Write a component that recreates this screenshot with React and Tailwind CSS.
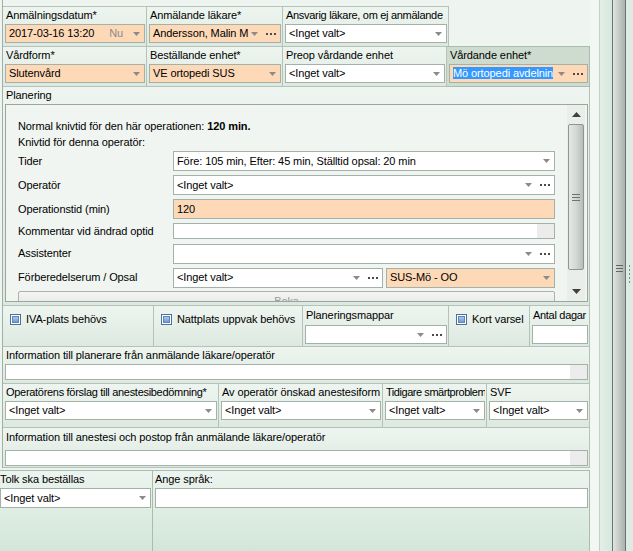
import React from 'react';

const cellBg = 'bg-linear-to-b from-[#eef5f0] to-[#dde9e0]';
const cellLine = 'border-r border-b border-[#b3c4b7]';

function Arrow() {
  return (
    <svg width="7" height="4" viewBox="0 0 7 4" className="shrink-0">
      <path d="M0 0H7L3.5 4Z" fill="#8b8b8b" />
    </svg>
  );
}

function Dots() {
  return (
    <svg width="10" height="2" viewBox="0 0 10 2" className="shrink-0">
      <rect x="0" y="0" width="2" height="2" fill="#4a4a4a" />
      <rect x="4" y="0" width="2" height="2" fill="#4a4a4a" />
      <rect x="8" y="0" width="2" height="2" fill="#4a4a4a" />
    </svg>
  );
}

function Field({ value, orange, arrow, dots, nu, textarea, selected, h = 'h-[19px]', className = '' }) {
  return (
    <div
      className={`flex items-center ${h} border border-[#a4b1a8] ${orange ? 'bg-[#fdd9b7]' : 'bg-white'} ${className}`}
    >
      <div className="flex-1 min-w-0 pl-[3px] whitespace-nowrap overflow-hidden">
        {selected ? <span className="bg-[#3399ff] text-white">{value}</span> : value}
      </div>
      {nu && <span className="text-[#8a8a8a] mr-[10px]">Nu</span>}
      {arrow && (
        <div className={dots ? 'mr-[8px]' : 'mr-[4px]'}>
          <Arrow />
        </div>
      )}
      {dots && (
        <div className="mr-[4px]">
          <Dots />
        </div>
      )}
      {textarea && <div className="w-[17px] self-stretch bg-[#ececec]" />}
    </div>
  );
}

function Check({ label }) {
  return (
    <div className="flex items-center gap-[5px] pt-[7px] pl-[5px]">
      <div className="w-[11px] h-[11px] border border-[#4f6f96] bg-white p-px">
        <div className="w-full h-full border border-[#5d86bb] bg-linear-to-b from-[#a9c7ec] to-[#6f9bd3]" />
      </div>
      <span className="leading-[12px] whitespace-nowrap">{label}</span>
    </div>
  );
}

function Cell({ w, label, children, className = '', labelClass = 'h-[17px] leading-[17px]', pb = 'pb-[3px]' }) {
  return (
    <div className={`${w} ${cellLine} ${cellBg} pl-[2px] pr-px ${pb} flex flex-col ${className}`}>
      {label && <div className={`${labelClass} pl-px whitespace-nowrap overflow-hidden`}>{label}</div>}
      {children}
    </div>
  );
}

function PlanRow({ label, children }) {
  return (
    <div className="flex items-center">
      <div className="w-[155px] shrink-0">{label}</div>
      <div className="w-[382px]">{children}</div>
    </div>
  );
}

function Planering() {
  return (
    <div className="h-[198px] border border-[#9aa69e] bg-[#f0f5f1] flex overflow-hidden">
      <div className="w-[561px] pl-[12px] pr-[12px] pt-[13px] flex flex-col">
        <div className="h-[16px] leading-[16px]">
          Normal knivtid för den här operationen: <b>120 min.</b>
        </div>
        <div className="h-[16px] leading-[16px]">Knivtid för denna operatör:</div>
        <div className="flex flex-col gap-[4px] mt-px">
          <PlanRow label="Tider">
            <Field h="h-[20px]" value="Före: 105 min, Efter: 45 min, Ställtid opsal: 20 min" arrow />
          </PlanRow>
          <PlanRow label="Operatör">
            <Field h="h-[20px]" value="<Inget valt>" arrow dots />
          </PlanRow>
          <PlanRow label="Operationstid (min)">
            <Field h="h-[20px]" value="120" orange />
          </PlanRow>
          <PlanRow label="Kommentar vid ändrad optid">
            <Field h="h-[16px]" value="" textarea />
          </PlanRow>
          <PlanRow label="Assistenter">
            <Field h="h-[20px]" value="" arrow dots />
          </PlanRow>
          <PlanRow label="Förberedelserum / Opsal">
            <div className="flex gap-[3px]">
              <Field h="h-[20px]" className="w-[210px]" value="<Inget valt>" arrow dots />
              <Field h="h-[20px]" className="w-[169px]" value="SUS-Mö - OO" arrow orange />
            </div>
          </PlanRow>
        </div>
        <div className="mt-[3px] h-[22px] shrink-0 border border-[#a9b2ac] rounded-[2px] bg-linear-to-b from-[#f4f5f4] to-[#dde2de] flex items-center justify-center text-[#9a9a9a]">
          Boka
        </div>
      </div>
      <div className="w-[18px] flex flex-col items-center bg-[#eaeeeb] py-px">
        <div className="h-[17px] flex items-center justify-center">
          <svg width="9" height="5" viewBox="0 0 9 5">
            <path d="M0 5L4.5 0L9 5Z" fill="#404040" />
          </svg>
        </div>
        <div className="mt-[1px] h-[146px] w-[16px] rounded-[2px] border border-[#8c9692] bg-linear-to-r from-[#e4e7e5] via-[#d3d8d5] to-[#b7beba] flex items-center justify-center">
          <svg width="8" height="7" viewBox="0 0 8 7">
            <rect x="0" y="0" width="8" height="1" fill="#6c7470" />
            <rect x="0" y="3" width="8" height="1" fill="#6c7470" />
            <rect x="0" y="6" width="8" height="1" fill="#6c7470" />
          </svg>
        </div>
        <div className="flex-1" />
        <div className="h-[17px] flex items-center justify-center">
          <svg width="9" height="5" viewBox="0 0 9 5">
            <path d="M0 0L4.5 5L9 0Z" fill="#404040" />
          </svg>
        </div>
      </div>
    </div>
  );
}

export default function App() {
  return (
    <div className="w-[633px] h-[551px] overflow-hidden flex bg-[#eef5f0] text-[11px] text-black font-['Liberation_Sans',Arial,sans-serif] tracking-[-0.1px]">
      <div className="w-[590px] shrink-0 flex flex-col">
        <div className="ml-[2px] border-l border-[#9fb1a4] flex flex-col">
          <div className="h-[6px]" />
          {/* row 1 */}
          <div className="flex">
            <div className="flex border-t border-[#b3c4b7]">
              <Cell w="w-[144px]" label="Anmälningsdatum*">
                <Field value="2017-03-16 13:20" orange nu arrow />
              </Cell>
              <Cell w="w-[136px]" label="Anmälande läkare*">
                <Field value="Andersson, Malin M" orange arrow dots />
              </Cell>
              <Cell
                w="w-[166px]"
                label="Ansvarig läkare, om ej anmälande"
                labelClass="h-[17px] leading-[17px] tracking-[-0.3px]"
              >
                <Field value="<Inget valt>" arrow />
              </Cell>
            </div>
          </div>
          {/* row 2 */}
          <div className="flex">
            <Cell w="w-[144px]" label="Vårdform*">
              <Field value="Slutenvård" orange arrow />
            </Cell>
            <Cell w="w-[136px]" label="Beställande enhet*">
              <Field value="VE ortopedi SUS" orange arrow />
            </Cell>
            <Cell w="w-[164px]" label="Preop vårdande enhet">
              <Field value="<Inget valt>" arrow />
            </Cell>
            <div className="w-[143px] -mt-px border-t border-r border-b border-[#a9bcad] bg-[#cddccf] pl-[2px] pr-px pb-[3px] flex flex-col">
              <div className="h-[17px] leading-[17px] pl-px">Vårdande enhet*</div>
              <Field value="Mö ortopedi avdelnin" orange arrow dots selected />
            </div>
          </div>
          {/* Planering */}
          <div className="flex">
            <Cell w="w-[587px]" label="Planering" pb="pb-[3px]" className="pr-[2px]">
              <Planering />
            </Cell>
          </div>
          {/* row 4 */}
          <div className="flex h-[41px]">
            <Cell w="w-[151px]" pb="">
              <Check label="IVA-plats behövs" />
            </Cell>
            <Cell w="w-[149px]" pb="">
              <Check label="Nattplats uppvak behövs" />
            </Cell>
            <Cell w="w-[146px]" label="Planeringsmappar" labelClass="h-[18px] leading-[18px] mb-px" pb="">
              <Field value="" arrow dots />
            </Cell>
            <Cell w="w-[81px]" pb="">
              <Check label="Kort varsel" />
            </Cell>
            <Cell w="w-[60px]" label="Antal dagar" labelClass="h-[18px] leading-[18px] mb-px tracking-[-0.3px]" pb="">
              <Field value="" />
            </Cell>
          </div>
          {/* row 5 */}
          <div className="flex">
            <Cell w="w-[587px]" label="Information till planerare från anmälande läkare/operatör">
              <Field h="h-[16px]" value="" textarea />
            </Cell>
          </div>
          {/* row 6 */}
          <div className="flex">
            <Cell
              w="w-[216px]"
              label="Operatörens förslag till anestesibedömning*"
              labelClass="h-[17px] leading-[17px] tracking-[-0.3px]"
              pb="pb-[7px]"
            >
              <Field value="<Inget valt>" arrow />
            </Cell>
            <Cell w="w-[164px]" label="Av operatör önskad anestesiform" pb="pb-[7px]">
              <Field value="<Inget valt>" arrow />
            </Cell>
            <Cell
              w="w-[104px]"
              label="Tidigare smärtproblem"
              labelClass="h-[17px] leading-[17px] tracking-[-0.45px]"
              pb="pb-[7px]"
            >
              <Field value="<Inget valt>" arrow />
            </Cell>
            <Cell w="w-[103px]" label="SVF" pb="pb-[7px]">
              <Field value="<Inget valt>" arrow />
            </Cell>
          </div>
          {/* row 7 */}
          <div className="flex">
            <Cell
              w="w-[587px]"
              label="Information till anestesi och postop från anmälande läkare/operatör"
              labelClass="h-[22px] leading-[18px]"
              pb="pb-px"
            >
              <Field h="h-[16px]" value="" textarea />
            </Cell>
          </div>
        </div>
        <div className="h-[2px]" />
        {/* bottom panels */}
        <div className="flex flex-1">
          <div className="w-[153px] border-t border-r border-[#a9bcad] bg-linear-to-b from-[#ecf4ef] to-[#d3e6d8] flex flex-col">
            <div className="h-[17px] leading-[17px] whitespace-nowrap">Tolk ska beställas</div>
            <Field h="h-[20px]" className="w-[151px]" value="<Inget valt>" arrow />
          </div>
          <div className="w-[437px] border-t border-r border-[#a9bcad] bg-linear-to-b from-[#ecf4ef] to-[#d3e6d8] pl-[2px] pr-px flex flex-col">
            <div className="h-[17px] leading-[17px]">Ange språk:</div>
            <Field h="h-[20px]" value="" />
          </div>
        </div>
      </div>
      {/* right splitter strip */}
      <div className="flex h-full">
        <div className="w-[9px] bg-[#f2f7f3]" />
        <div className="w-px bg-[#c3cfc7]" />
        <div className="w-[12px] bg-linear-to-r from-[#e3f0e8] to-[#d6e8dd]" />
        <div className="w-px bg-[#6a746e]" />
        <div className="w-[12px] bg-linear-to-r from-[#e1e5e3] to-[#a9b2ad] flex flex-col items-center pt-[265px]">
          <svg width="7" height="7" viewBox="0 0 7 7">
            <rect x="0" y="0" width="7" height="1" fill="#5f6863" />
            <rect x="0" y="3" width="7" height="1" fill="#5f6863" />
            <rect x="0" y="6" width="7" height="1" fill="#5f6863" />
          </svg>
        </div>
        <div className="w-px bg-[#6a746e]" />
        <div className="w-[7px] bg-[#dfeae4] flex flex-col items-center pt-[265px]">
          <svg width="2" height="20" viewBox="0 0 2 20">
            <rect x="0" y="0" width="1" height="2" fill="#7d8781" />
            <rect x="0" y="4" width="1" height="2" fill="#7d8781" />
            <rect x="0" y="8" width="1" height="2" fill="#7d8781" />
            <rect x="0" y="12" width="1" height="2" fill="#7d8781" />
            <rect x="0" y="16" width="1" height="2" fill="#7d8781" />
          </svg>
        </div>
      </div>
    </div>
  );
}
